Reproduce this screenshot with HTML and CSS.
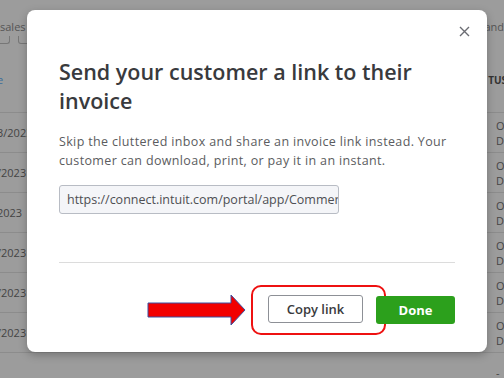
FILE: index.html
```html
<!DOCTYPE html>
<html lang="en">
<head>
    <meta charset="UTF-8">
    <meta name="viewport" content="width=device-width, initial-scale=1.0">
    <title>Share invoice link</title>
    <link rel="stylesheet" href="styles.css">
</head>
<body>
    <div class="page">
        <div class="toolbar">
            <span class="toolbar-label">sales</span>
            <span class="toolbar-label right">and</span>
        </div>
        <div class="toolbar-boxes"><span class="tbox"></span><span class="tbox"></span></div>
        <div class="table-head">
            <span class="link">e</span>
            <span class="status-head">TUS</span>
        </div>
        <div class="row"><span>3/2023</span><span class="status">O<br>De</span></div>
        <div class="row"><span>/2023</span><span class="status">O<br>De</span></div>
        <div class="row"><span>2023</span><span class="status">O<br>De</span></div>
        <div class="row"><span>/2023</span><span class="status">O<br>De</span></div>
        <div class="row"><span>/2023</span><span class="status">O<br>De</span></div>
        <div class="row"><span>/2023</span><span class="status">O<br>De</span></div>
        <div class="row"><span></span><span class="status">-</span></div>
    </div>

    <div class="modal">
        <button class="close-btn" aria-label="Close">
            <svg width="11" height="11" viewBox="0 0 11 11"><path d="M1 1 L10 10 M10 1 L1 10" stroke="#6b6c72" stroke-width="1.4" fill="none"/></svg>
        </button>
        <h1>Send your customer a link to their invoice</h1>
        <p>Skip the cluttered inbox and share an invoice link instead. Your customer can download, print, or pay it in an instant.</p>
        <div class="link-field">https://connect.intuit.com/portal/app/CommerceNetwork/view/scs-v1-</div>
        <hr>
        <div class="actions">
            <svg class="arrow" width="100" height="32" viewBox="0 0 100 32">
                <path d="M1 9 H84 V1 L98 16 L84 31 V23 H1 Z" fill="#f20000" stroke="#3a4fa0" stroke-width="1"/>
            </svg>
            <div class="highlight">
                <button class="btn copy-btn">Copy link</button>
            </div>
            <button class="btn done-btn">Done</button>
        </div>
    </div>
</body>
</html>
```

FILE: styles.css
```css
body {
    margin: 0;
    width: 504px;
    height: 378px;
    overflow: hidden;
    background: #9c9c9c;
    font-family: "Open Sans", "Lato", sans-serif;
    position: relative;
}
.page {
    color: #3f3f3f;
    font-size: 11px;
}
.toolbar {
    display: flex;
    justify-content: space-between;
    padding: 19px 0 0 0;
    height: 17px;
    color: #555;
}
.toolbar-boxes {
    display: flex;
    gap: 8px;
    height: 9px;
    margin-left: -6px;
}
.tbox {
    width: 14px;
    height: 7px;
    border: 1px solid #777;
    border-top: none;
    border-radius: 0 0 3px 3px;
}
.table-head {
    display: flex;
    justify-content: space-between;
    align-items: center;
    height: 68px;
    border-bottom: 1px solid #8c8c8c;
    box-sizing: border-box;
    padding-top: 2px;
}
.link { color: #3a6d9b; margin-left: -3px; }
.status-head { font-weight: 700; font-size: 10px; color: #333; margin-right: -3px; }
.row {
    display: flex;
    justify-content: space-between;
    align-items: center;
    height: 40px;
    border-bottom: 1px solid #8c8c8c;
    box-sizing: border-box;
    color: #444;
}
.row span:first-child { margin-left: -3px; }
.status {
    width: 8px;
    line-height: 15px;
    color: #444;
    overflow: hidden;
}
.modal {
    position: absolute;
    left: 27px;
    top: 10px;
    width: 460px;
    height: 342px;
    box-sizing: border-box;
    background: #fff;
    border-radius: 8px;
    box-shadow: 0 3px 8px rgba(0, 0, 0, 0.25);
    padding: 47px 32px 0 32px;
}
.close-btn {
    position: absolute;
    right: 17px;
    top: 16px;
    border: none;
    background: none;
    padding: 0;
    width: 11px;
    height: 11px;
}
.close-btn svg { display: block; }
h1 {
    margin: 0;
    font-size: 21.5px;
    line-height: 29px;
    font-weight: 600;
    color: #393a3d;
    width: 396px;
}
p {
    margin: 17px 0 0 0;
    font-size: 12.5px;
    line-height: 19px;
    letter-spacing: 0.35px;
    color: #5b5c60;
    width: 396px;
}
.link-field {
    margin-top: 15px;
    width: 280px;
    height: 29px;
    box-sizing: border-box;
    border: 1px solid #b8bcc4;
    border-radius: 3px;
    background: #f4f5f8;
    font-size: 12.5px;
    color: #4e4f53;
    line-height: 27px;
    padding-left: 7px;
    white-space: nowrap;
    overflow: hidden;
}
hr {
    margin: 48px 0 0 0;
    border: none;
    border-top: 1px solid #dcdcdc;
    width: 396px;
}
.actions {
    display: flex;
    align-items: center;
    justify-content: flex-end;
    width: 396px;
    margin-top: 22px;
}
.arrow { margin-right: 4px; display: block; }
.highlight {
    border: 2px solid #ee1111;
    border-radius: 10px;
    padding: 8px 21px 10px 15px;
    margin-right: -10px;
}
.btn {
    height: 28px;
    font-family: inherit;
    font-size: 13px;
    font-weight: 600;
    border-radius: 3px;
    cursor: pointer;
    padding: 0;
}
.copy-btn {
    width: 95px;
    background: #fff;
    color: #393a3d;
    border: 1.5px solid #8d9096;
}
.done-btn {
    width: 79px;
    background: #2ca01c;
    color: #fff;
    border: none;
    font-weight: 700;
}
```
